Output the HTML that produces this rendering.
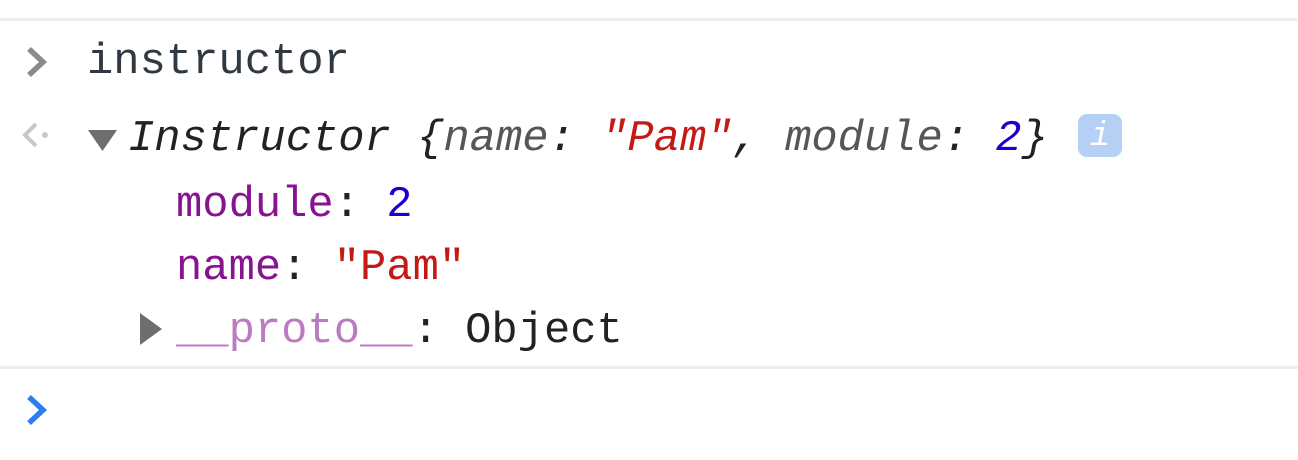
<!DOCTYPE html>
<html><head><style>
body{margin:0;width:1298px;height:460px;background:#fff;overflow:hidden;position:relative;font-family:"Liberation Mono",monospace;font-size:43.8px}
.t{position:absolute;white-space:pre;line-height:1}
.sep{position:absolute;left:0;width:1298px;height:3px;background:#eeeeee}
</style></head><body>
<div class="sep" style="top:18px"></div>
<div class="sep" style="top:366px"></div>
<svg style="position:absolute;left:0;top:0" width="1298" height="460">
<path d="M29 49 L43 62 L29 75" fill="none" stroke="#8a8a8a" stroke-width="5.5"/>
<path d="M36 124 L25 135 L36 146" fill="none" stroke="#c8c8c8" stroke-width="4"/>
<circle cx="45" cy="135" r="3" fill="#c8c8c8"/>
<path d="M88 130 L117 130 L102.5 151 Z" fill="#6e6e6e"/>
<path d="M140 313 L162 329 L140 345 Z" fill="#6e6e6e"/>
<path d="M29 397 L43 410 L29 423" fill="none" stroke="#2f7ef0" stroke-width="5.5"/>
<rect x="1078" y="114" width="44" height="43" rx="9" fill="#b6cff4"/>
</svg>
<div class="t" style="left:1090px;top:120px;color:#fff;font-style:italic;font-size:34px">i</div>
<div class="t" style="left:87px;top:41px;color:#303942">instructor</div>
<div class="t" style="left:128px;top:118px;color:#222;font-style:italic">Instructor {<span style="color:#565656">name</span>: <span style="color:#c41a16">"Pam"</span>, <span style="color:#565656">module</span>: <span style="color:#1c00cf">2</span>}</div>
<div class="t" style="left:176px;top:184px;color:#222"><span style="color:#881391">module</span>: <span style="color:#1c00cf">2</span></div>
<div class="t" style="left:176px;top:247px;color:#222"><span style="color:#881391">name</span>: <span style="color:#c41a16">"Pam"</span></div>
<div class="t" style="left:176px;top:310px;color:#222"><span style="color:#bb7bc0">__proto__</span>: Object</div>
</body></html>
